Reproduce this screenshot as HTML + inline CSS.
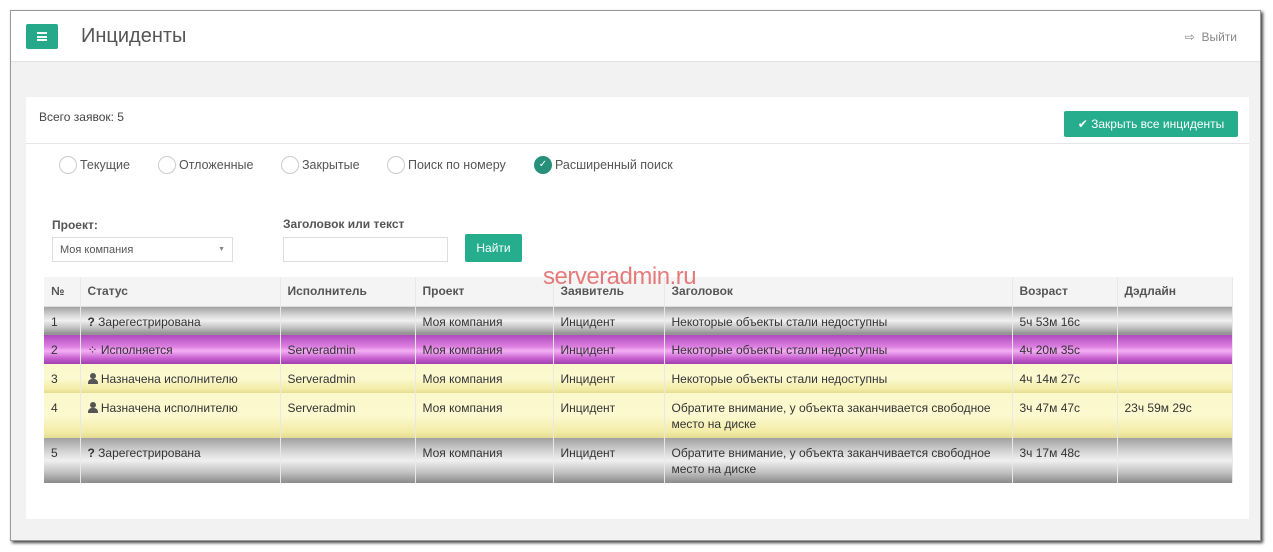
<!DOCTYPE html>
<html><head><meta charset="utf-8"><style>
*{margin:0;padding:0;box-sizing:border-box}
body{width:1273px;height:552px;background:#fff;font-family:"Liberation Sans","DejaVu Sans",sans-serif;position:relative;overflow:hidden;color:#333}
.win{position:absolute;left:10px;top:10px;width:1251px;height:531px;background:#f2f2f2;border:1px solid #999;box-shadow:2px 2px 3px #444}
.hdr{position:absolute;left:0;top:0;width:100%;height:51px;background:#fff;border-bottom:1px solid #e2e2e2}
.menu{position:absolute;left:15px;top:13px;width:32px;height:25px;background:#26a98b;border-radius:2px}
.menu i{position:absolute;left:11px;width:10px;height:2px;background:#fff}
.title{position:absolute;left:70px;top:14px;font-size:20px;color:#555}
.exit{position:absolute;right:23px;top:19px;font-size:12px;color:#888}
.panel{position:absolute;left:15px;top:86px;width:1223px;height:422px;background:#fff}
.ph{position:absolute;left:0;top:0;width:100%;height:47px;border-bottom:1px solid #e5e5e5}
.btn{position:absolute;background:#26ad8e;color:#fff;font-size:12px;border-radius:2px;text-align:center}
.radio{position:absolute;top:59px;font-size:12.5px;color:#555;display:flex;align-items:center}
.radio b{display:inline-block;width:18px;height:18px;border:1px solid #ccc;border-radius:50%;margin-right:3px}
.lbl{position:absolute;font-size:12px;font-weight:bold;color:#555}
.inp{position:absolute;border:1px solid #ddd;height:25px;font-size:11px;color:#555;padding:6px 7px}
table{position:absolute;left:44px;top:277px;width:1188px;table-layout:fixed;border-collapse:collapse;font-size:12px;color:#333}
td,th{border-right:1px solid #e8e8e8;padding:0 7px;vertical-align:top;text-align:left;overflow:hidden}
th{height:29px;background:#f4f4f4;color:#555;font-size:12px;vertical-align:middle;border-bottom:1px solid #ddd}
td{padding-top:7px;line-height:16px}
.g td{background:linear-gradient(#a0a0a0 0%,#dcdcdc 35%,#f0f0f0 50%,#c4c4c4 75%,#8a8a8a 100%)}
.p td{background:linear-gradient(#b048c0 0%,#dc80e0 40%,#f4b0f4 55%,#c860d0 80%,#a040b0 100%)}
.y td{background:linear-gradient(#fbf8cc 0%,#fcf9d0 50%,#f3eda8 85%,#e4dc90 100%)}
.r1{height:29px}.r2{height:45px}
.wm{position:absolute;left:543px;top:263px;font-size:24px;color:#e05050;opacity:.75;font-family:"Liberation Sans",sans-serif;letter-spacing:-0.5px}
.u{display:inline-block;width:10px;height:11px;position:relative;vertical-align:-1px}
.u:before{content:"";position:absolute;left:2px;top:0;width:6px;height:6px;border-radius:50%;background:#555}
.u:after{content:"";position:absolute;left:0;top:6px;width:10px;height:5px;border-radius:4px 4px 0 0;background:#555}
</style></head><body>
<div class="win">
 <div class="hdr">
  <div class="menu"><i style="top:8px"></i><i style="top:11.5px"></i><i style="top:15px"></i></div>
  <div class="title">Инциденты</div>
  <div class="exit">⇨&nbsp; Выйти</div>
 </div>
 <div class="panel">
  <div class="ph">
   <div style="position:absolute;left:13px;top:13px;font-size:12px;color:#444">Всего заявок: 5</div>
   <div class="btn" style="left:1038px;top:14px;width:174px;height:26px;line-height:26px">✔ Закрыть все инциденты</div>
  </div>
  <div class="radio" style="left:33px"><b></b>Текущие</div>
  <div class="radio" style="left:132px"><b></b>Отложенные</div>
  <div class="radio" style="left:255px"><b></b>Закрытые</div>
  <div class="radio" style="left:361px"><b></b>Поиск по номеру</div>
  <div class="radio" style="left:508px"><b style="background:#26907a;border-color:#26907a;color:#fff;font-size:10px;text-align:center;line-height:16px">✓</b>Расширенный поиск</div>
  <div class="lbl" style="left:26px;top:121px">Проект:</div>
  <div class="inp" style="left:26px;top:140px;width:181px">Моя компания<span style="position:absolute;right:7px;top:8px;font-size:7px;color:#888">▼</span></div>
  <div class="lbl" style="left:257px;top:120px">Заголовок или текст</div>
  <div class="inp" style="left:257px;top:140px;width:165px"></div>
  <div class="btn" style="left:439px;top:137px;width:57px;height:28px;line-height:28px">Найти</div>
 </div>
</div>
<table>
<colgroup><col style="width:36px"><col style="width:200px"><col style="width:135px"><col style="width:138px"><col style="width:111px"><col style="width:348px"><col style="width:105px"><col style="width:115px"></colgroup>
<tr><th>№</th><th>Статус</th><th>Исполнитель</th><th>Проект</th><th>Заявитель</th><th>Заголовок</th><th>Возраст</th><th>Дэдлайн</th></tr>
<tr class="g r1"><td>1</td><td><b>?</b> Зарегестрирована</td><td></td><td>Моя компания</td><td>Инцидент</td><td>Некоторые объекты стали недоступны</td><td>5ч 53м 16с</td><td></td></tr>
<tr class="p r1"><td>2</td><td>⁘ Исполняется</td><td>Serveradmin</td><td>Моя компания</td><td>Инцидент</td><td>Некоторые объекты стали недоступны</td><td>4ч 20м 35с</td><td></td></tr>
<tr class="y r1"><td>3</td><td><span class="u"></span> Назначена исполнителю</td><td>Serveradmin</td><td>Моя компания</td><td>Инцидент</td><td>Некоторые объекты стали недоступны</td><td>4ч 14м 27с</td><td></td></tr>
<tr class="y r2"><td>4</td><td><span class="u"></span> Назначена исполнителю</td><td>Serveradmin</td><td>Моя компания</td><td>Инцидент</td><td>Обратите внимание, у объекта заканчивается свободное место на диске</td><td>3ч 47м 47с</td><td>23ч 59м 29с</td></tr>
<tr class="g r2"><td>5</td><td><b>?</b> Зарегестрирована</td><td></td><td>Моя компания</td><td>Инцидент</td><td>Обратите внимание, у объекта заканчивается свободное место на диске</td><td>3ч 17м 48с</td><td></td></tr>
</table>
<div class="wm">serveradmin.ru</div>
</body></html>
